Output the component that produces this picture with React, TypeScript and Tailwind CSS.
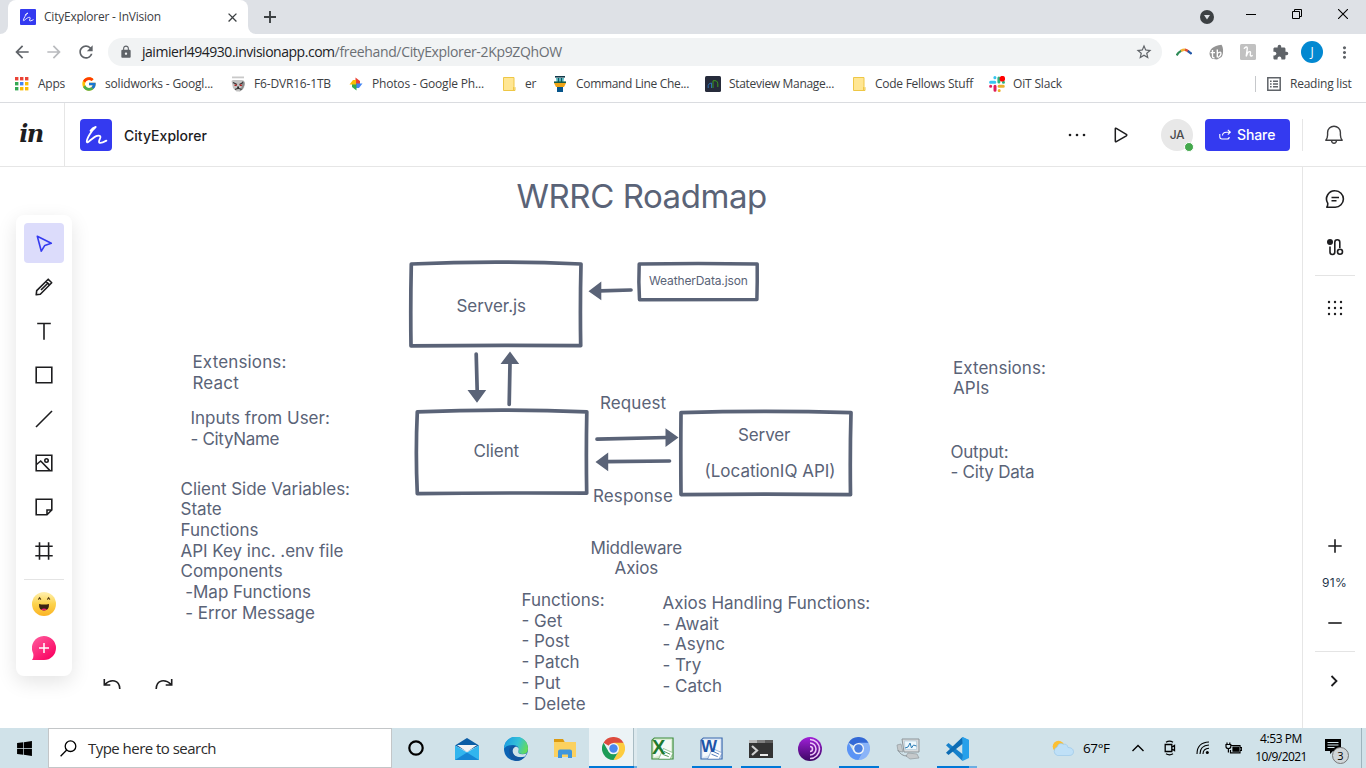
import type { ReactNode } from "react";
import { FaWindows } from "react-icons/fa";
import { FcGoogle } from "react-icons/fc";
import {
  MdArrowBack,
  MdArrowForward,
  MdClose,
  MdExtension,
  MdLock,
  MdMoreVert,
  MdRefresh,
  MdStarBorder,
} from "react-icons/md";

const UI = "font-['Open_Sans',sans-serif]";
const INTER = "font-['Inter',sans-serif]";

/* ---------- Browser chrome ---------- */

function FreehandMark({ className }: { className: string }) {
  return (
    <svg viewBox="0 0 32 32" className={className}>
      <path
        d="M10.500 11.800Q12.600 8.600 15.700 8C12 11 6.600 19.500 6.800 22.800C7.300 25.400 12 18.400 17 16.900C20.200 16 21.200 17.400 20 19.700C17.600 24.300 19.400 25.400 26.400 21.600"
        fill="none"
        stroke="#fff"
        strokeWidth="1.800"
        strokeLinecap="round"
        strokeLinejoin="round"
      />
    </svg>
  );
}

function TabStrip() {
  return (
    <div className="flex h-[34px] bg-[#dee1e6]">
      <div className="flex w-2 items-end bg-white">
        <div className="h-full w-2 rounded-br-lg bg-[#dee1e6]" />
      </div>
      <div className="flex w-[240px] items-center rounded-t-lg bg-white pl-3 pr-2">
        <span className="h-4 w-4 shrink-0 rounded-[1px] bg-[#343af0]">
          <FreehandMark className="h-4 w-4" />
        </span>
        <span className="ml-2 flex-1 whitespace-nowrap text-xs tracking-[-0.23px] text-[#3c4043]">
          CityExplorer - InVision
        </span>
        <MdClose size={15} className="text-[#3c4043]" />
      </div>
      <div className="w-2 bg-white">
        <div className="h-full w-2 rounded-bl-lg bg-[#dee1e6]" />
      </div>
      <div className="flex w-7 items-center justify-center">
        <svg viewBox="0 0 12 12" className="h-3 w-3">
          <path d="M6 0v12M0 6h12" stroke="#3c4043" strokeWidth="1.9" />
        </svg>
      </div>
      <div className="ml-auto flex items-center">
        <div className="flex w-[43px] items-center justify-center">
          <svg viewBox="0 0 14 14" className="h-[14px] w-[14px]">
            <circle cx="7" cy="7" r="7" fill="#3c4043" />
            <path d="M4 5h6L7 9.6z" fill="#dee1e6" />
          </svg>
        </div>
        <div className="flex w-[46px] items-center justify-center">
          <svg viewBox="0 0 10 10" className="h-[10px] w-[10px]">
            <path d="M0 2.5h10" stroke="#000" />
          </svg>
        </div>
        <div className="flex w-[46px] items-center justify-center">
          <svg viewBox="0 0 10 10" className="mb-1.5 h-[10px] w-[10px]">
            <path d="M.5 2.5h7v7h-7zM2.5 2.5v-2h7v7h-2" fill="none" stroke="#000" />
          </svg>
        </div>
        <div className="flex w-[46px] items-center justify-center">
          <svg viewBox="0 0 10 10" className="mb-1.5 h-[10px] w-[10px]">
            <path d="M0 0l10 10M10 0L0 10" stroke="#000" strokeWidth="1.1" />
          </svg>
        </div>
      </div>
    </div>
  );
}

function AddressBar() {
  return (
    <div className="flex h-9 items-center pl-[6px] pr-[6px]">
      <div className="flex w-8 justify-center text-[#5f6368]">
        <MdArrowBack size={20} />
      </div>
      <div className="flex w-8 justify-center text-[#b9bbbe]">
        <MdArrowForward size={20} />
      </div>
      <div className="flex w-8 justify-center text-[#5f6368]">
        <MdRefresh size={20} />
      </div>
      <div className="ml-[6px] flex h-7 w-[1054px] items-center rounded-full bg-[#f1f3f4] pl-[11px] pr-[9px]">
        <MdLock size={14} className="text-[#5f6368]" />
        <span className="ml-[9px] whitespace-nowrap text-sm leading-5 tracking-[-0.47px] text-[#202124]">
          jaimierl494930.invisionapp.com
        </span>
        <span className="whitespace-nowrap text-sm leading-5 tracking-[-0.34px] text-[#6b6f74]">
          /freehand/CityExplorer-2Kp9ZQhOW
        </span>
        <MdStarBorder size={18} className="ml-auto text-[#5f6368]" />
      </div>
      <div className="ml-[6px] flex">
        <div className="flex w-8 items-center justify-center">
          <svg viewBox="0 0 16 8" className="h-2 w-4">
            <path d="M.6 7.400Q2 4.500 5.400 2.600" fill="none" stroke="#2e8b57" strokeWidth="2.200" />
            <path d="M5 2.900Q7.500 1.400 9.200 1.800" fill="none" stroke="#f2b134" strokeWidth="2.400" />
            <path d="M9 1.700Q11 2 12.400 3.400" fill="none" stroke="#df4b37" strokeWidth="2.400" />
            <path d="M11.800 3L15.600 5.800" fill="none" stroke="#2458a8" strokeWidth="2.200" />
          </svg>
        </div>
        <div className="flex w-8 items-center justify-center">
          <svg viewBox="0 0 16 16" className="h-4 w-4">
            <path d="M13.500 .8C15.600 4 15.600 10 13.500 13L9 15.600 4 14.800C-.5 11 .5 2 13.500 .8z" fill="#949494" />
            <path d="M4.500 6v6.200q0 2 2 1.300M2.500 8.600h4.500M9.300 5.500v8M9.300 9.500q4-3 3.600.6-.3 2-2.800 3.400" fill="none" stroke="#fff" strokeWidth="1.400" />
          </svg>
        </div>
        <div className="flex w-8 items-center justify-center">
          <svg viewBox="0 0 16 16" className="h-4 w-4">
            <rect width="16" height="16" rx="1.500" fill="#c1c1c1" />
            <path d="M4.300 4.200q3-2.400 3 .2L6.200 12.400 7.800 8.400q3.400-2 2.600 1.200-.7 3.400 1.800 2" fill="none" stroke="#fff" strokeWidth="1.400" strokeLinecap="round" />
          </svg>
        </div>
        <div className="flex w-8 items-center justify-center text-[#5f6368]">
          <MdExtension size={17} />
        </div>
        <div className="flex w-8 items-center justify-center">
          <span className="flex h-[22px] w-[22px] items-center justify-center rounded-full bg-[#0288d1] text-xs text-white">
            J
          </span>
        </div>
        <div className="flex w-8 items-center justify-center text-[#5f6368]">
          <MdMoreVert size={19} />
        </div>
      </div>
    </div>
  );
}

function AppsIcon() {
  const colors = ["#ea4335", "#ea4335", "#ea4335", "#34a853", "#4285f4", "#fbbc04", "#34a853", "#fbbc04", "#fbbc04"];
  return (
    <svg viewBox="0 0 16 16" className="h-4 w-4">
      {colors.map((c, i) => (
        <rect key={i} x={1 + (i % 3) * 5} y={1 + Math.floor(i / 3) * 5} width="3.4" height="3.4" fill={c} />
      ))}
    </svg>
  );
}

function BulldogIcon() {
  return (
    <svg viewBox="0 0 16 16" className="h-4 w-4">
      <path d="M2 .5h12v1.800H2z" fill="#c9c9c9" />
      <path d="M1.500 5q1-1.500 3-1h7q3 0 3.500 3l-1 5-4 3.500H6.500L3 12z" fill="#c2c2c2" />
      <path d="M12 5q3 0 2.500 4l-2 4.500-3 2q3-4 2.500-10.500z" fill="#8b8b8b" />
      <path d="M3 6.500l4 2M13 6.500l-3.500 2M5 13.500q3.500-2 6.500 0" fill="none" stroke="#333" strokeWidth="1.200" />
      <path d="M4.500 9.300h2.200M9.700 9.300h2.200" stroke="#b32020" strokeWidth="1.400" />
      <path d="M7.200 10.500h1.800v2H7.200z" fill="#222" />
    </svg>
  );
}

function PhotosIcon() {
  return (
    <svg viewBox="0 0 16 16" className="h-4 w-4">
      <path d="M7.500 1.500l4.500 3.500v3.500H7.500z" fill="#ea4335" />
      <path d="M14.500 7.500L11 12H7.500V7.500z" fill="#4285f4" />
      <path d="M8.500 14.500L4 11V8h4.500z" fill="#34a853" />
      <path d="M1.500 8.500L5 4h3v4.500z" fill="#fbbc04" />
    </svg>
  );
}

function FolderIcon() {
  return (
    <svg viewBox="0 0 16 16" className="h-4 w-4">
      <path d="M2.500 1.500h10.500v9l1 1v3H2.500z" fill="#ffe693" stroke="#eec746" />
      <path d="M12.500 11v3.500" stroke="#eec746" />
    </svg>
  );
}

function TowerIcon() {
  return (
    <svg viewBox="0 0 16 16" className="h-4 w-4">
      <path d="M3 0h10v1.600H3z" fill="#12394a" />
      <path d="M4 2h8l-.6 4H4.600z" fill="#57b9bd" />
      <path d="M6.500 2v4M9.500 2v4" stroke="#145064" />
      <path d="M2 5.400h12V7H2z" fill="#165b46" />
      <path d="M2 7h12l-2 4H4z" fill="#f0a414" />
      <path d="M5 11h6v5H5z" fill="#07558b" />
    </svg>
  );
}

function StateviewIcon() {
  return (
    <svg viewBox="0 0 16 16" className="h-4 w-4">
      <rect width="16" height="16" rx="1.500" fill="#262b3b" />
      <path d="M3.200 12V9.500q.6-2.500 3.300-2.500v5" fill="none" stroke="#2d6fb4" />
      <path d="M8 12V4.800q4.500-1 4.800 3V11" fill="none" stroke="#3c9b1e" />
    </svg>
  );
}

function SlackIcon() {
  return (
    <svg viewBox="0 0 16 16" className="h-4 w-4" fill="none" strokeWidth="3" strokeLinecap="round">
      <path d="M1.600 6.200h4.200M5.900 1.600v.1" stroke="#36c5f0" />
      <path d="M9.900 2v4M14.400 6.200h.1" stroke="#2eb67d" />
      <path d="M14.300 10.300h-4.200M10.200 14.500v.1" stroke="#ecb22e" />
      <path d="M6 14.300v-4M1.600 10.300h.1" stroke="#e01e5a" />
      <circle cx="13.300" cy="2.700" r="2.800" fill="#f00" />
    </svg>
  );
}

function Bookmark({ icon, label, className }: { icon: ReactNode; label: string; className: string }) {
  return (
    <div className={`flex items-center gap-2 whitespace-nowrap ${className}`}>
      <span className="h-4 w-4 shrink-0">{icon}</span>
      <span>{label}</span>
    </div>
  );
}

function BookmarksBar() {
  return (
    <div className="flex h-[33px] items-center border-b border-[#dadce0] pb-1 pl-[14px] text-xs text-[#3c4043]">
      <Bookmark icon={<AppsIcon />} label="Apps" className="w-[67px] tracking-[-0.25px]" />
      <Bookmark icon={<FcGoogle size={16} />} label="solidworks - Googl..." className="w-[149px] tracking-[-0.19px]" />
      <Bookmark icon={<BulldogIcon />} label="F6-DVR16-1TB" className="w-[118px] tracking-[-0.17px]" />
      <Bookmark icon={<PhotosIcon />} label="Photos - Google Ph..." className="w-[153px] tracking-[-0.18px]" />
      <Bookmark icon={<FolderIcon />} label="er" className="w-[51px] tracking-[-0.2px]" />
      <Bookmark icon={<TowerIcon />} label="Command Line Che..." className="w-[153px] tracking-[-0.32px]" />
      <Bookmark icon={<StateviewIcon />} label="Stateview Manage..." className="w-[146px] tracking-[-0.31px]" />
      <Bookmark icon={<FolderIcon />} label="Code Fellows Stuff" className="w-[138px] tracking-[-0.26px]" />
      <Bookmark icon={<SlackIcon />} label="OiT Slack" className="tracking-[-0.16px]" />
      <div className="ml-auto flex w-[111px] items-center border-l border-[#c6c8cb] pl-[11px]">
        <svg viewBox="0 0 14 14" className="h-[14px] w-[14px]">
          <path d="M.8.8h12.400v12.400H.8z" fill="none" stroke="#5f6368" strokeWidth="1.500" />
          <path d="M3 4.200h1.600M6 4.200h5M3 7h1.600M6 7h5M3 9.800h1.600M6 9.800h5" stroke="#5f6368" strokeWidth="1.400" />
        </svg>
        <span className="ml-[9px] whitespace-nowrap leading-4 tracking-[-0.23px]">Reading list</span>
      </div>
    </div>
  );
}

/* ---------- Application ---------- */

function AppHeader() {
  return (
    <header className={`flex h-16 items-center border-b border-[#e6e6e6] ${INTER}`}>
      <div className="flex h-full w-[65px] items-center justify-center border-r border-[#e6e6e6]">
        <span className="pb-px pr-[2px] font-['DejaVu_Serif',serif] text-[24px] font-bold italic leading-7 tracking-[-1.5px] text-[#1d1d1f]">in</span>
      </div>
      <span className="ml-[15px] h-8 w-8 rounded bg-[#343af0]">
        <FreehandMark className="h-8 w-8" />
      </span>
      <span className="ml-3 pt-0.5 text-sm font-[450] tracking-[0.03px] text-[#1d1d1f]">CityExplorer</span>
      <div className="ml-auto flex h-8 items-center">
        <svg viewBox="0 0 18 4" className="h-1 w-[18px]">
          <circle cx="2" cy="2" r="1.300" fill="#1d1d1f" />
          <circle cx="9" cy="2" r="1.300" fill="#1d1d1f" />
          <circle cx="16" cy="2" r="1.300" fill="#1d1d1f" />
        </svg>
        <svg viewBox="0 0 14 16" className="ml-7 h-4 w-[14px]">
          <path d="M1.300 2v12q0 1.200 1 .6l10-5.800q1-.8 0-1.500L2.300 1.400q-1-.6-1 .6z" fill="none" stroke="#1d1d1f" strokeWidth="1.500" />
        </svg>
        <span className="relative ml-[33px] flex h-8 w-8 items-center justify-center rounded-full bg-[#e8e8e8] text-xs font-medium tracking-tight text-[#4a4a4c]">
          JA
          <span className="absolute -bottom-px -right-px h-[10px] w-[10px] rounded-full border border-white bg-[#43a84c]" />
        </span>
        <button className="ml-3 flex h-8 w-[85px] items-center rounded bg-[#343af0] pl-[14px] text-sm font-[550] tracking-[-0.1px] text-white">
          <svg viewBox="0 0 12 12" className="mr-[6px] h-3 w-3 fill-none stroke-white stroke-[1.1]">
            <path d="M.8 5v2.800q0 2.200 2.200 2.200h5.200q2 0 2-2" />
            <path d="M3.500 6.600q0-3.400 4-3.400h3.600M8.800.8l2.500 2.400-2.500 2.400" />
          </svg>
          Share
        </button>
        <div className="ml-3 flex h-8 w-16 items-center justify-center border-l border-[#e6e6e6] pr-[2px]">
          <svg viewBox="0 0 20 20" className="h-5 w-5 fill-none stroke-[#3c3c3e] stroke-[1.4]">
            <path d="M1.800 15.200Q3.600 13 3.600 10V7.600a6.400 6.400 0 0 1 12.800 0V10q0 3 1.800 5.200z" strokeLinejoin="round" />
            <path d="M7.500 15.500q.3 2.800 2.500 2.800t2.500-2.800" />
          </svg>
        </div>
      </div>
    </header>
  );
}

function Tool({ children, active = false }: { children: ReactNode; active?: boolean }) {
  return (
    <button className={`flex h-10 w-10 items-center justify-center rounded ${active ? "bg-[#dcdcfb]" : ""}`}>
      <svg viewBox="0 0 24 24" className={`h-6 w-6 fill-none stroke-[1.6] ${active ? "stroke-[#343af0]" : "stroke-[#1d1d1f]"}`}>
        {children}
      </svg>
    </button>
  );
}

function ToolPalette() {
  return (
    <aside className="absolute left-4 top-12 flex w-14 flex-col items-center gap-1 rounded-lg bg-white pb-2 pt-2 shadow-[0_6px_20px_rgba(0,0,0,0.11)]">
      <Tool active>
        <path d="M5.300 5.300L19.300 12.300L12.800 14.400L9.300 20.200z" strokeLinejoin="round" />
      </Tool>
      <Tool>
        <path d="M4.200 19.800l.5-4.200L16.200 4.200l3.500 3.500L8.300 19.200zM14 6.400l3.500 3.500M15.500 8.500L9 15" strokeLinejoin="round" />
      </Tool>
      <Tool>
        <path d="M5.200 4.500h13.600M12 4.500v16.300" />
      </Tool>
      <Tool>
        <path d="M4.200 4.200h15.600v15.600H4.200z" />
      </Tool>
      <Tool>
        <path d="M4 20L20 4" />
      </Tool>
      <Tool>
        <path d="M4.200 4.200h15.600v15.600H4.200zM4.500 13.500L8.700 10l9.300 9.600" />
        <circle cx="14.500" cy="9.500" r="1.700" />
      </Tool>
      <Tool>
        <path d="M4.200 4.200h15.600v10.800l-4.800 4.800H4.200zM15 19.800V15h4.800" />
      </Tool>
      <Tool>
        <path d="M3.300 7.300h17.400M3.300 16.700h17.400M7.500 3.300v17.400M16.600 3.300v17.400" />
      </Tool>
      <div className="mt-[4px] h-px w-10 bg-[#e4e4e4]" />
      <button className="flex h-10 w-10 items-center justify-center">
        <svg viewBox="0 0 24 24" className="h-6 w-6">
          <defs>
            <linearGradient id="face" x1="0" y1="0" x2="0" y2="1">
              <stop offset="0" stopColor="#fff0b0" />
              <stop offset=".5" stopColor="#fcd34c" />
              <stop offset="1" stopColor="#fbb324" />
            </linearGradient>
          </defs>
          <circle cx="12" cy="12" r="12" fill="url(#face)" />
          <path d="M6.300 7.600l1.300-1.800 1.300 1.800M15.300 7.600l1.300-1.800 1.300 1.800" fill="none" stroke="#5a4218" strokeWidth="1.100" />
          <path d="M7 12q5 1 10 0 .3 6.500-5 6.500T7 12z" fill="#3b2413" />
          <path d="M9 17.400q3-2 6 0-3 2-6 0z" fill="#f0226b" />
        </svg>
      </button>
      <button className="flex h-10 w-10 items-center justify-center">
        <svg viewBox="0 0 24 24" className="h-6 w-6">
          <defs>
            <linearGradient id="pink" x1="0" y1="0" x2=".8" y2="1">
              <stop offset="0" stopColor="#ff5fa0" />
              <stop offset="1" stopColor="#fa005f" />
            </linearGradient>
          </defs>
          <path d="M12 0a12 12 0 0 1 0 24H0q2-2.500 1.200-6.500A12 12 0 0 1 12 0z" fill="url(#pink)" />
          <path d="M12 7v10M7 12h10" stroke="#fff" strokeWidth="1.500" />
        </svg>
      </button>
    </aside>
  );
}

function Note({ className, lines }: { className: string; lines: string[] }) {
  return (
    <div className={`absolute whitespace-pre text-[17px] leading-[20.7px] ${className}`}>
      {lines.map((line) => (
        <div key={line}>{line}</div>
      ))}
    </div>
  );
}

function Diagram() {
  return (
    <svg viewBox="0 0 1302 561" className="absolute left-0 top-0 h-[561px] w-[1302px]">
      <g transform="translate(0 -167)" fill="none" stroke="#5a6377" strokeWidth="3.700" strokeLinejoin="round" strokeLinecap="round">
        <path d="M411.300 264Q496 260.300 581 264Q580 305 580.700 345.700Q496 344.800 411 345.900Q410.400 305 411.300 264z" />
        <path d="M417.300 411.800Q502 408.400 586.800 411.800Q586 453 586.700 493.200Q502 492.600 417.300 493.700Q415.400 453 417.300 411.800z" />
        <path d="M681 412.600Q766 410 851 412.600Q849.900 453 850.500 494.600Q766 493.700 681 494.600Q680.600 453 681 412.600z" />
        <path d="M639.200 264Q698 263 757.200 264Q757.400 282 756.900 299.500Q698 299.500 639.500 299.700Q638.400 282 639.200 264z" strokeWidth="3.500" />
        <path d="M631 290L600 290.800M476.200 354L477.200 391M509.200 404.500L510 363M597 439.200L667 437.500M669.500 461L607 461.600" strokeWidth="3.700" />
      </g>
      <g transform="translate(0 -167)" fill="#5a6377">
        <path d="M588.500 291.200L601.300 281.500V300.200zM477 402.700L467.500 390H486.200zM510 351.500L500.500 364H519.200zM678.500 437.500L665.500 428.300V447zM595.500 462L608.200 452.500V471.200z" />
      </g>
    </svg>
  );
}

function Canvas() {
  return (
    <main className={`relative flex-1 overflow-hidden bg-white text-[#5a6377] ${INTER}`}>
      <Diagram />
      <h1 className="absolute left-[516.500px] top-[9px] whitespace-nowrap text-[33px] font-[370] leading-10 tracking-[-0.45px]">
        WRRC Roadmap
      </h1>
      <Note className="left-[456.500px] top-[129px] tracking-[-0.05px]" lines={["Server.js"]} />
      <div className="absolute left-[649px] top-[106px] text-xs leading-4 tracking-[-0.14px]">WeatherData.json</div>
      <Note className="left-[192.500px] top-[185px] tracking-[0.15px]" lines={["Extensions:", "React"]} />
      <Note className="left-[190.500px] top-[241px]" lines={["Inputs from User:"]} />
      <Note className="left-[190.500px] top-[261.500px] tracking-[-0.33px]" lines={["- CityName"]} />
      <Note
        className="left-[180.500px] top-[311.500px] tracking-[-0.03px]"
        lines={["Client Side Variables:", "State", "Functions", "API Key inc. .env file", "Components", " -Map Functions", " - Error Message"]}
      />
      <Note className="left-[600px] top-[225.500px] tracking-[0.1px]" lines={["Request"]} />
      <Note className="left-[593px] top-[319px] tracking-[0.1px]" lines={["Response"]} />
      <Note className="left-[473.500px] top-[273.700px] tracking-[-0.1px]" lines={["Client"]} />
      <Note className="left-[738px] top-[258px] tracking-[-0.1px]" lines={["Server"]} />
      <Note className="left-[704.500px] top-[294px]" lines={["(LocationIQ API)"]} />
      <Note className="left-[590.500px] top-[370.700px] text-center tracking-[-0.2px]" lines={["Middleware", "Axios"]} />
      <Note className="left-[521.500px] top-[423px]" lines={["Functions:", "- Get", "- Post", "- Patch", "- Put", "- Delete"]} />
      <Note className="left-[662.500px] top-[426px] tracking-[-0.02px]" lines={["Axios Handling Functions:", "- Await", "- Async", "- Try", "- Catch"]} />
      <Note className="left-[953px] top-[190.500px] tracking-[0.050px]" lines={["Extensions:", "APIs"]} />
      <Note className="left-[950.500px] top-[274.500px] tracking-[-0.24px]" lines={["Output:", "- City Data"]} />
      <ToolPalette />
      <div className="absolute left-[103px] top-[511px] flex gap-[34px]">
        <svg viewBox="0 0 18 12" className="h-3 w-[18px] fill-none stroke-[#1d1d1f] stroke-[1.6]">
          <path d="M1.300 1v6h6M1.800 6.500Q6.500 2 11.500 3T16.800 11" />
        </svg>
        <svg viewBox="0 0 18 12" className="h-3 w-[18px] fill-none stroke-[#1d1d1f] stroke-[1.6]">
          <path d="M16.700 1v6h-6M16.200 6.500Q11.500 2 6.500 3T1.200 11" />
        </svg>
      </div>
    </main>
  );
}

function RightRail() {
  return (
    <aside className={`flex w-16 shrink-0 flex-col items-center border-l border-[#e6e6e6] ${INTER}`}>
      <svg viewBox="0 0 20 20" className="mt-[22px] h-5 w-5 fill-none stroke-[#1d1d1f] stroke-[1.6]">
        <path d="M10.200 1.800a8.200 8.200 0 0 1 0 16.400H1.800Q3 16.500 2.700 14.200A8.200 8.200 0 0 1 10.200 1.800zM6.500 8.500h7.500M6.500 11.700h5" strokeLinejoin="round" />
      </svg>
      <svg viewBox="0 0 18 18" className="mt-[29px] h-[18px] w-[18px] fill-none stroke-[#1d1d1f] stroke-[1.6]">
        <circle cx="4" cy="4" r="3" fill="#1d1d1f" stroke="none" />
        <path d="M4 8.500v5.500q0 2.500 2.400 2.500T8.800 14V4.200q0-2.400 2.500-2.400t2.500 2.400V10" />
        <circle cx="14" cy="13.700" r="2.500" />
      </svg>
      <div className="ml-px mt-[19px] h-px w-10 bg-[#e4e4e4]" />
      <svg viewBox="0 0 16 16" className="mt-6 h-4 w-4 fill-[#1d1d1f]">
        {[2, 8, 14].map((y) => [2, 8, 14].map((x) => <circle key={`${x}-${y}`} cx={x} cy={y} r="1.200" />))}
      </svg>
      <svg viewBox="0 0 14 14" className="ml-px mt-[223px] h-[14px] w-[14px] stroke-[#1d1d1f] stroke-[1.6]">
        <path d="M7 .3v13.400M.3 7h13.400" />
      </svg>
      <span className="mt-[22px] text-xs leading-4 tracking-[0.25px] text-[#24344a]">91%</span>
      <svg viewBox="0 0 14 14" className="mt-[25px] h-[14px] w-[14px] stroke-[#1d1d1f] stroke-[1.6]">
        <path d="M.3 7h13.400" />
      </svg>
      <div className="ml-px mt-[21px] h-px w-10 bg-[#e4e4e4]" />
      <svg viewBox="0 0 8 12" className="mt-[23px] mr-[2px] h-3 w-2 fill-none stroke-[#1d1d1f] stroke-[1.8]">
        <path d="M1.500 1l5 5-5 5" />
      </svg>
    </aside>
  );
}

/* ---------- Taskbar ---------- */

function Slot({ children, underline = "" }: { children: ReactNode; underline?: string }) {
  return (
    <div className="flex h-10 w-[49px] flex-col items-center">
      <div className="flex h-[38px] items-center pt-[3px]">{children}</div>
      <div className={`h-0.5 w-10 ${underline}`} />
    </div>
  );
}

function ChromeLogo({ top, right, left, core }: { top: string; right: string; left: string; core: string }) {
  return (
    <svg viewBox="0 0 24 24" className="h-[23px] w-[23px]">
      <path d="M12 12L1.600 6A12 12 0 0 1 22.400 6z" fill={top} />
      <path d="M12 6h10.400A12 12 0 0 1 12 24l5.200-9z" fill={right} />
      <path d="M1.600 6l5.200 9A6 6 0 0 0 17.200 15L12 24A12 12 0 0 1 1.600 6z" fill={left} />
      <circle cx="12" cy="12" r="5.800" fill="#f4f7fa" />
      <circle cx="12" cy="12" r="4.400" fill={core} />
    </svg>
  );
}

function OfficeIcon({ letter, stroke, pale, letterClass }: { letter: string; stroke: string; pale: string; letterClass: string }) {
  return (
    <span className="relative h-[23px] w-[23px]">
      <svg viewBox="0 0 24 24" className="h-[23px] w-[23px]">
        <path d="M3.500 1H23v22H1V3.500z" fill={pale} stroke={stroke} strokeWidth="1.200" />
        <path d="M3 3h18v12L3 21z" fill="#fff" opacity=".75" />
        <path d="M13 12l10 4.500-3 6.500H8z" fill="#fff" stroke={stroke} strokeWidth=".5" />
        <path d="M13.500 15l6.500 3M12 18l6.500 2.500" stroke={stroke} strokeWidth=".9" />
      </svg>
      <span className={`absolute left-px top-[1px] font-['Liberation_Sans',sans-serif] font-bold leading-[18px] ${letterClass}`}>{letter}</span>
    </span>
  );
}

function Taskbar() {
  return (
    <footer className="flex h-10 items-center bg-[#d0e2e9] text-black">
      <div className="flex w-12 justify-center">
        <FaWindows size={17} />
      </div>
      <div className="flex h-10 w-[344px] items-center border border-[#c3c6c8] bg-white pl-[11px]">
        <svg viewBox="0 0 17 17" className="h-[17px] w-[17px] fill-none stroke-black stroke-[1.3]">
          <circle cx="10.500" cy="6.200" r="5.300" />
          <path d="M6.700 10L.6 16.200" />
        </svg>
        <span className="ml-[11px] whitespace-nowrap text-[15px] leading-5 tracking-[-0.53px] text-[#2b2b2b]">Type here to search</span>
      </div>
      <div className="flex w-[50px] justify-center pr-[2px]">
        <svg viewBox="0 0 16 16" className="h-4 w-4">
          <circle cx="8" cy="8" r="6.700" fill="none" stroke="#000" strokeWidth="2.200" />
        </svg>
      </div>
      <Slot>
        <svg viewBox="0 0 24 22" className="h-[22px] w-6">
          <path d="M0 7.500L12 0l12 7.500-12 6z" fill="#0c5da5" />
          <path d="M2 7h20l-10 7z" fill="#f4f4f4" />
          <path d="M0 7.500l12 7 12-7V22H0z" fill="#31b5ee" />
          <path d="M0 22L12 14.500 24 22z" fill="#1686d4" />
        </svg>
      </Slot>
      <Slot>
        <svg viewBox="0 0 24 24" className="h-6 w-6">
          <defs>
            <linearGradient id="edgeTop" x1="0" y1=".3" x2="1" y2=".6">
              <stop offset="0" stopColor="#1b9de2" />
              <stop offset=".55" stopColor="#35c1d8" />
              <stop offset="1" stopColor="#66dd55" />
            </linearGradient>
          </defs>
          <circle cx="12" cy="12" r="12" fill="#0b63b4" />
          <path d="M0 11.500A12 12 0 0 1 24 11.500Q24 17 18.500 17 13 17 14.500 13.500 15.500 8.500 9.500 8 3 7.500 0 11.500z" fill="url(#edgeTop)" />
          <path d="M8 14.500Q8 10.500 12 9.500 15.600 10.500 14.500 13.500 13 17 18.500 17.300 21 17.300 23 16.200L21 19.500Q15 21 11 19 8 17.500 8 14.500z" fill="#d0e2e9" />
          <path d="M5 13Q6 8 12 9.300 7.500 11.500 9 16 11.500 21 18 20.500L20.500 20Q17 24 12 24 4.500 22 5 13z" fill="#1356a0" />
        </svg>
      </Slot>
      <Slot>
        <svg viewBox="0 0 22 20" className="h-5 w-[22px]">
          <path d="M0 0h9l2 3.500H0z" fill="#dc9a10" />
          <path d="M0 3h22v15H0z" fill="#fbd15f" />
          <path d="M4 19v-6.500q0-2 2-2h10q2 0 2 2V19h-4v-3.500H8V19z" fill="#3f96dc" />
        </svg>
      </Slot>
      <div className="flex h-10 w-12 flex-col">
        <div className="flex h-[38px]">
          <div className="flex w-[45px] items-center justify-center border-r border-[#a9bcc4] bg-[#ecf3f6] pl-1 pt-[3px]">
            <ChromeLogo top="#dd4b3e" right="#fdcc3f" left="#1c9c57" core="#4a88ee" />
          </div>
          <div className="w-[3px] bg-[#dde9ee]" />
        </div>
        <div className="flex h-0.5">
          <div className="w-[45px] bg-[#0078d7]" />
          <div className="w-[3px] bg-[#6caee3]" />
        </div>
      </div>
      <div className="w-px" />
      <Slot>
        <OfficeIcon letter="X" stroke="#3c8c3c" pale="#d8ecd2" letterClass="text-[20px] text-[#1f7a2e]" />
      </Slot>
      <Slot underline="bg-[#0078d7]">
        <OfficeIcon letter="W" stroke="#3a68ae" pale="#dbe6f4" letterClass="text-[17px] text-[#1f55a8]" />
      </Slot>
      <Slot underline="bg-[#0078d7]">
        <svg viewBox="0 0 24 18" className="h-[18px] w-6">
          <path d="M0 0h24v18H0z" fill="#333" />
          <path d="M0 0h8v3H0z" fill="#b8b8b8" />
          <path d="M8 0h8v3H8z" fill="#808080" />
          <path d="M16 0h8v3h-8z" fill="#5c5c5c" />
          <path d="M3 6l5 4.500L3 15" fill="none" stroke="#d0d0d0" strokeWidth="2.200" />
          <path d="M11 15h8" stroke="#fff" strokeWidth="1.800" />
        </svg>
      </Slot>
      <Slot>
        <svg viewBox="0 0 24 24" className="h-6 w-6">
          <defs>
            <linearGradient id="onion" x1="0" y1="0" x2="0" y2="1">
              <stop offset="0" stopColor="#a020d8" />
              <stop offset="1" stopColor="#3d0664" />
            </linearGradient>
          </defs>
          <circle cx="12" cy="12" r="12" fill="url(#onion)" />
          <path d="M12 2.500a9.500 9.500 0 0 1 0 19M12 6a6 6 0 0 1 0 12M12 9.500a2.500 2.500 0 0 1 0 5" fill="none" stroke="#ecc8f6" strokeWidth="1.600" />
        </svg>
      </Slot>
      <Slot underline="bg-[#0078d7]">
        <ChromeLogo top="#3369d6" right="#8ab4f8" left="#5b94f5" core="#4a7fe0" />
      </Slot>
      <Slot>
        <svg viewBox="0 0 24 22" className="h-[22px] w-6">
          <path d="M6 1h17v13H8z" fill="#d9dcde" stroke="#8d9599" />
          <path d="M8.500 3h12v8.500H9z" fill="#eef8fd" stroke="#a9c6d6" strokeWidth=".6" />
          <path d="M9 10l3-1 2-4 1.500 5 2-3 3 1" fill="none" stroke="#2b7db5" />
          <path d="M1 7l4-1 2 8-5-1zM12 15l9 1 2 4-9 1-4-3z" fill="#c5c9cb" stroke="#949b9f" strokeWidth=".7" />
          <path d="M2 12q3 6 9 6" fill="none" stroke="#8d9599" />
        </svg>
      </Slot>
      <div className="flex h-10 w-[49px] flex-col items-center">
        <div className="flex h-[38px] items-center pt-[3px]">
          <svg viewBox="0 0 24 24" className="h-6 w-6">
            <path d="M17.500 0L24 3v18l-6.500 3z" fill="#27a0ea" />
            <path d="M17.500 24L1 8.300 3.500 6 18 17.500z" fill="#1681cc" />
            <path d="M17.500 0L1 15.700 3.500 18 18 6.500z" fill="#0c6cb4" />
            <path d="M17.500 6.500v11L24 21V3L17.500 0z" fill="#27a0ea" />
          </svg>
        </div>
        <div className="flex h-0.5 w-10">
          <div className="w-8 bg-[#0078d7]" />
          <div className="w-2 bg-[#6caee3]" />
        </div>
      </div>
      <div className="ml-auto flex h-full items-center">
        <svg viewBox="0 0 22 16" className="h-4 w-[22px]">
          <circle cx="6.500" cy="6.500" r="5.800" fill="#fcc033" />
          <path d="M5.500 15.500A4.500 4.500 0 0 1 5 7Q7 2 11.500 4.200 15 3.500 16 7.500 21 7.500 21.500 11.500 21.500 15.500 17 15.500z" fill="#bfe0f7" stroke="#94c5ea" strokeWidth=".6" />
        </svg>
        <span className="ml-[9px] w-[48px] whitespace-nowrap text-[13.500px] leading-5 tracking-[-0.4px]">67°F</span>
        <svg viewBox="0 0 14 8" className="h-2 w-[14px] fill-none stroke-black stroke-[1.4]">
          <path d="M1.500 7L7 1.500 12.500 7" />
        </svg>
        <svg viewBox="0 0 14 16" className="ml-[18px] h-4 w-[14px] fill-none stroke-black stroke-[1.3]">
          <path d="M2.200 4.500h6.600v7H2.200zM9 7l2.500-1.500v5L9 9M3 2.200q3.500-2 7 0M3 13.800q3.500 2 7 0" />
        </svg>
        <svg viewBox="0 0 14 14" className="ml-[19px] h-[14px] w-[14px] fill-none stroke-black stroke-[1.1]">
          <path d="M1 13Q1 1.500 13 1M4 13Q4 4.500 13 4M7 13Q7 7.500 13 7.200" />
          <circle cx="11.300" cy="11.500" r="1.500" fill="#000" stroke="none" />
        </svg>
        <svg viewBox="0 0 17 14" className="ml-[15px] h-[14px] w-[17px] fill-none stroke-black stroke-[1.2]">
          <path d="M6 4.500h9v7.300H5.500V9M15.500 6.500h1.200v3h-1.200M2 1.500v2M4.800 1.500v2M1 3.500h4.800v2q0 2-2.400 2T1 5.500zM3.400 7.500v4" />
          <path d="M8 6.200h5.500v4H8z" fill="#000" />
        </svg>
        <div className="ml-[13px] w-[52px] whitespace-nowrap text-center text-xs leading-[18px]">
          <div className="tracking-[-0.41px]">4:53 PM</div>
          <div className="tracking-[-0.6px]">10/9/2021</div>
        </div>
        <span className="relative ml-[18px] flex h-full w-[37px] items-center border-r border-[#9fb4bd]">
          <svg viewBox="0 0 16 15" className="mb-1 h-[15px] w-4">
            <path d="M0 0h16v12H8l-3 3v-3H0z" fill="#000" />
            <path d="M2.500 3.500h11M2.500 6h11M2.500 8.500h7" stroke="#d0e2e9" strokeWidth="1" />
          </svg>
          <span className="absolute left-[7px] top-[19px] flex h-[17px] w-[17px] items-center justify-center rounded-full border border-[#777] bg-[#d0d6d9] text-[11px] leading-none">
            3
          </span>
        </span>
        <span className="w-1" />
      </div>
    </footer>
  );
}

export default function App() {
  return (
    <div className={`flex h-[768px] w-[1366px] flex-col overflow-hidden bg-white ${UI}`}>
      <TabStrip />
      <AddressBar />
      <BookmarksBar />
      <AppHeader />
      <div className="flex min-h-0 flex-1">
        <Canvas />
        <RightRail />
      </div>
      <Taskbar />
    </div>
  );
}
